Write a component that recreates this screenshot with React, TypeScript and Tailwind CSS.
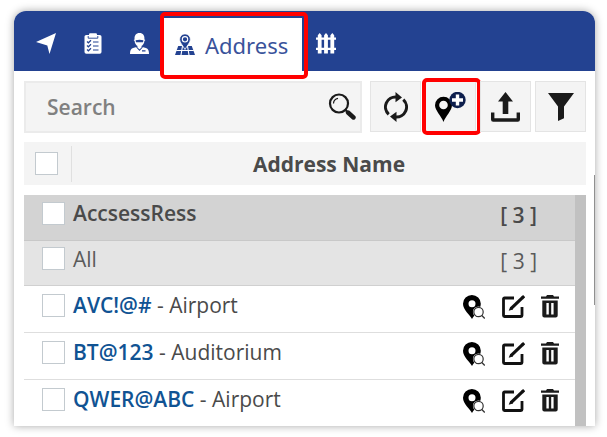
import { useState } from "react";

const groups = [
  { name: "AccsessRess", count: 3, active: true },
  { name: "All", count: 3, active: false },
];

const addresses = [
  { code: "AVC!@#", type: "Airport" },
  { code: "BT@123", type: "Auditorium" },
  { code: "QWER@ABC", type: "Airport" },
];

function ArrowIcon() {
  return (
    <svg width="20" height="21" viewBox="0 0 20 21" fill="currentColor">
      <path d="M20 0 13.500 21 11.300 12.600 0 9z" />
    </svg>
  );
}

function ClipboardIcon() {
  return (
    <svg width="18" height="21" viewBox="0 0 18 21">
      <rect x="0.5" y="2" width="17" height="18.8" rx="1.8" fill="currentColor" />
      <rect x="5" y="0.3" width="8" height="4" rx="1.2" fill="currentColor" />
      <path d="M4.2 3v2.2h9.6V3" fill="none" stroke="#234291" strokeWidth="0.9" />
      <path
        d="M3 8.5l1.4 1.3L7 7.3M3 12.5l1.4 1.3L7 11.3M3 16.5l1.4 1.3L7 15.3M9 9h5.5M9 13h5.5M9 17h5.5"
        fill="none"
        stroke="#234291"
        strokeWidth="1.2"
      />
    </svg>
  );
}

function WorkerIcon() {
  return (
    <svg width="19" height="21" viewBox="0 0 19 21">
      <path
        d="M4.600 6.500C4.200 2.500 6 0 9.500 0s5.300 2.500 4.900 6.500l1 .4-1 1.200c-.2 2.300-1.400 4.100-2.900 5v.7l4.500 1.100c2.200.7 3 2.500 3 6.100H0c0-3.600.8-5.400 3-6.100l4.500-1.100v-.7c-1.500-.9-2.700-2.700-2.900-5l-1-1.200z"
        fill="currentColor"
      />
      <path d="M5.600 7.300c2.600-.9 5.200-.9 7.800 0l-.4 2H6z" fill="#234291" />
      <path d="M6.500 14l3 3.300 3-3.300M12 17.900h3.500" fill="none" stroke="#234291" strokeWidth="1.100" />
    </svg>
  );
}

function MapPinIcon() {
  return (
    <svg width="20" height="21" viewBox="0 0 20 21">
      <path d="M3.200 12h13.600L20 21H0z" fill="#234291" />
      <path
        d="M1.200 16.500h17.600M7.600 11.500l-1.600 9.500M12.400 11.500l1.600 9.500"
        stroke="#fff"
        strokeWidth="1.1"
      />
      <path
        d="M10 15.500C8 11.500 4.600 8.800 4.600 5.300a5.400 5.400 0 0 1 10.800 0c0 3.500-3.400 6.200-5.400 10.200z"
        fill="#234291"
        stroke="#fff"
        strokeWidth="0.8"
      />
      <circle cx="10" cy="5.300" r="2.700" fill="none" stroke="#fff" strokeWidth="1.1" />
    </svg>
  );
}

function FenceIcon() {
  return (
    <svg width="20" height="21" viewBox="0 0 20 21" fill="currentColor">
      <path d="M1.800 2.200 3.700 0l1.900 2.200V20.500H1.800zM8.100 2.200 10 0l1.900 2.200V20.500H8.100zM14.400 2.200 16.300 0l1.900 2.200V20.500h-3.800z" />
      <path d="M0 4.500h20v2.200H0zM0 14.800h20v2.200H0z" />
    </svg>
  );
}

function SearchIcon() {
  return (
    <svg width="28" height="28" viewBox="0 0 28 28" fill="none" stroke="#1a1a1a">
      <circle cx="11" cy="10.500" r="9" strokeWidth="2.200" />
      <path d="M5.500 10.500A5.500 5.500 0 0 1 10 5.300" strokeWidth="1.200" />
      <path d="M17.500 17l2.500 2.500" strokeWidth="2" />
      <path d="M20 19.500l5.500 5" strokeWidth="4.400" strokeLinecap="round" />
    </svg>
  );
}

function RefreshIcon() {
  return (
    <svg width="24" height="30" viewBox="0 0 24 30">
      <g fill="none" stroke="#1a1a1a" strokeWidth="3">
        <path d="M4.700 22.300A10 10 0 0 1 12.500 5" />
        <path d="M19.300 7.700A10 10 0 0 1 11.500 25" />
      </g>
      <path d="M11.500 0l6.500 5.500-6.500 4.700zM12.500 30L6 24.500l6.500-4.700z" fill="#1a1a1a" />
    </svg>
  );
}

function AddPinIcon() {
  return (
    <svg width="31" height="30" viewBox="0 0 31 30">
      <path
        fillRule="evenodd"
        d="M8.500 30C6.500 24 0 18.500 0 13.200a8.500 8.500 0 0 1 17 0C17 18.500 10.500 24 8.500 30zM8.500 8.700a4.300 4.300 0 1 0 0 8.600 4.300 4.300 0 0 0 0-8.600z"
        fill="#000"
      />
      <circle cx="22.500" cy="8" r="8.200" fill="#0e1f4d" />
      <path d="M22.500 2.500v11M17 8h11" stroke="#fff" strokeWidth="3.400" />
    </svg>
  );
}

function UploadIcon() {
  return (
    <svg width="29" height="30" viewBox="0 0 29 30" fill="#1a1a1a">
      <path d="M14.500 0 22 9.500h-4.700V22h-5.600V9.500H7z" />
      <path d="M0 20.500h3.400v5.700h22.200v-5.700H29v7a2.200 2.200 0 0 1-2.200 2.200H2.200A2.200 2.200 0 0 1 0 27.500z" />
    </svg>
  );
}

function FilterIcon() {
  return (
    <svg width="26" height="28" viewBox="0 0 26 28" fill="#1a1a1a">
      <path d="M0 0h26L16 13.500v11.700L10 28V13.500z" />
    </svg>
  );
}

function LocateIcon() {
  return (
    <svg width="22" height="24" viewBox="0 0 22 24">
      <path
        fillRule="evenodd"
        d="M9 24C6.500 19.500 0 14.500 0 8.700a8.900 8.700 0 0 1 17.800 0C17.800 14.500 11.500 19.500 9 24zM9 5.300a3.500 3.500 0 1 0 0 7 3.500 3.500 0 0 0 0-7z"
        fill="#000"
      />
      <circle cx="15.500" cy="17" r="5.600" fill="#fff" />
      <circle cx="15.500" cy="17" r="4.700" fill="#fff" stroke="#333" strokeWidth="1.200" />
      <path d="M18.800 20.500l3 3" stroke="#333" strokeWidth="1.400" />
    </svg>
  );
}

function EditIcon() {
  return (
    <svg width="23" height="23" viewBox="0 0 23 23" fill="none" stroke="#111">
      <path d="M12 3H2.500a1 1 0 0 0-1 1v16.500a1 1 0 0 0 1 1H19a1 1 0 0 0 1-1V12" strokeWidth="2.800" />
      <path d="M9 13.700l11.500-11" strokeWidth="3.200" />
      <path d="M20 3.200l2.200-2.100" strokeWidth="3.200" />
      <path d="M8.300 11.700l2.700 2.700-4.300 1.400z" fill="#111" stroke="none" />
    </svg>
  );
}

function TrashIcon() {
  return (
    <svg width="18" height="23" viewBox="0 0 18 23" fill="#1a1a1a">
      <path d="M0 1.500h5L6 0h6l1 1.500h5v2.300H0z" />
      <path
        fillRule="evenodd"
        d="M1.300 5.500h15.400V20.600a2 2 0 0 1-2 2H3.300a2 2 0 0 1-2-2zM5.400 8v11.500h2.400V8zM10.200 8v11.500h2.400V8z"
      />
    </svg>
  );
}

function Checkbox({ label }: { label: string }) {
  return (
    <input
      type="checkbox"
      aria-label={label}
      className="block size-[23px] shrink-0 appearance-none border border-[#c3cacf] bg-white checked:bg-[#234291]"
    />
  );
}

const tabButton = "flex w-[47px] items-center justify-center";
const toolButton =
  "relative flex h-[51px] w-[51px] shrink-0 items-center justify-center border border-[#e4e4e4] bg-[#f4f4f4]";
const outline = "pointer-events-none absolute rounded-[5px] border-4 border-[#ff0000]";

export default function App() {
  const [search, setSearch] = useState<string>("");

  return (
    <main className="min-h-screen bg-white pt-[11px] pr-3 pb-[11px] pl-[14px] font-['Open_Sans','Noto_Sans',sans-serif] text-[21px] leading-7 text-[#4a4a4a]">
      <section className="relative rounded-t-xl bg-white shadow-[0_0_9px_rgba(0,0,0,0.35)]">
        <nav className="flex h-[60px] rounded-t-xl bg-[#234291] pl-2 pt-1 text-white">
          <button className={tabButton} aria-label="Tracking">
            <ArrowIcon />
          </button>
          <button className={tabButton} aria-label="Tasks">
            <ClipboardIcon />
          </button>
          <button className={tabButton} aria-label="Drivers">
            <WorkerIcon />
          </button>
          <button className="relative mt-[3px] flex w-[139px] items-center gap-[10px] bg-white pl-3 text-[#3a539b]">
            <MapPinIcon />
            <span className="font-['Noto_Sans',sans-serif] text-[22px]">Address</span>
            <span className={`${outline} -top-[6px] -right-[6px] -bottom-2 -left-[3px]`} />
          </button>
          <button className={tabButton} aria-label="Geofence">
            <FenceIcon />
          </button>
        </nav>

        <div className="pt-[10px] pr-[9px] pl-[10px]">
          {/* Toolbar */}
          <div className="flex gap-1">
            <label className="mr-1 flex h-[52px] min-w-0 flex-1 items-center border-2 border-[#ebebeb] bg-[#f4f4f4] pr-1 pl-[21px]">
              <input
                className="min-w-0 flex-1 bg-transparent font-semibold outline-none placeholder:text-[#808080]"
                placeholder="Search"
                aria-label="Search"
                value={search}
                onChange={(e) => setSearch(e.target.value)}
              />
              <SearchIcon />
            </label>
            <button className={toolButton} aria-label="Refresh">
              <RefreshIcon />
            </button>
            <button className={toolButton} aria-label="Add address">
              <AddPinIcon />
              <span className={`${outline} -top-1 -right-[6px] -bottom-1 -left-1`} />
            </button>
            <button className={toolButton} aria-label="Upload">
              <UploadIcon />
            </button>
            <button className={toolButton} aria-label="Filter">
              <FilterIcon />
            </button>
          </div>

          {/* List header */}
          <div className="mt-[9px] flex h-[43px] items-center bg-[#f4f4f4] pl-[11px]">
            <Checkbox label="Select all" />
            <div className="ml-[13px] h-9 border-l border-[#e0e0e0]" />
            <h2 className="flex-1 text-center font-bold">Address Name</h2>
          </div>

          {/* List */}
          <div className="mt-[10px] border-r-[11px] border-[#c1c1c1]">
            <table className="w-full">
              <tbody>
                {groups.map((group) => (
                  <tr
                    key={group.name}
                    className={
                      group.active
                        ? "h-[45px] border-b border-[#c8c8c8] bg-[#d3d3d3] font-semibold"
                        : "h-[45px] border-b border-[#d0d0d0] bg-[#e4e4e4] text-[#5a5a5a]"
                    }
                  >
                    <td className="w-[49px] pb-2 pl-[18px]">
                      <Checkbox label={group.name} />
                    </td>
                    <td className="pb-2">{group.name}</td>
                    <td className="w-[112px] pr-[38px] pb-1 text-right">[ {group.count} ]</td>
                  </tr>
                ))}
                {addresses.map((address) => (
                  <tr key={address.code} className="h-[47px] border-b border-[#dedede] last:border-b-0">
                    <td className="w-[49px] pb-[6px] pl-[18px]">
                      <Checkbox label={address.code} />
                    </td>
                    <td className="pb-2">
                      <span className="font-semibold text-[#105393]">{address.code}</span> - {address.type}
                    </td>
                    <td className="w-[112px] pb-1">
                      <div className="flex items-center justify-between pr-4">
                        <button aria-label="Locate">
                          <LocateIcon />
                        </button>
                        <button aria-label="Edit">
                          <EditIcon />
                        </button>
                        <button aria-label="Delete">
                          <TrashIcon />
                        </button>
                      </div>
                    </td>
                  </tr>
                ))}
              </tbody>
            </table>
          </div>
        </div>

        <div className="absolute top-[164px] right-0 h-[130px] w-px bg-[#909090]" />
      </section>
    </main>
  );
}
